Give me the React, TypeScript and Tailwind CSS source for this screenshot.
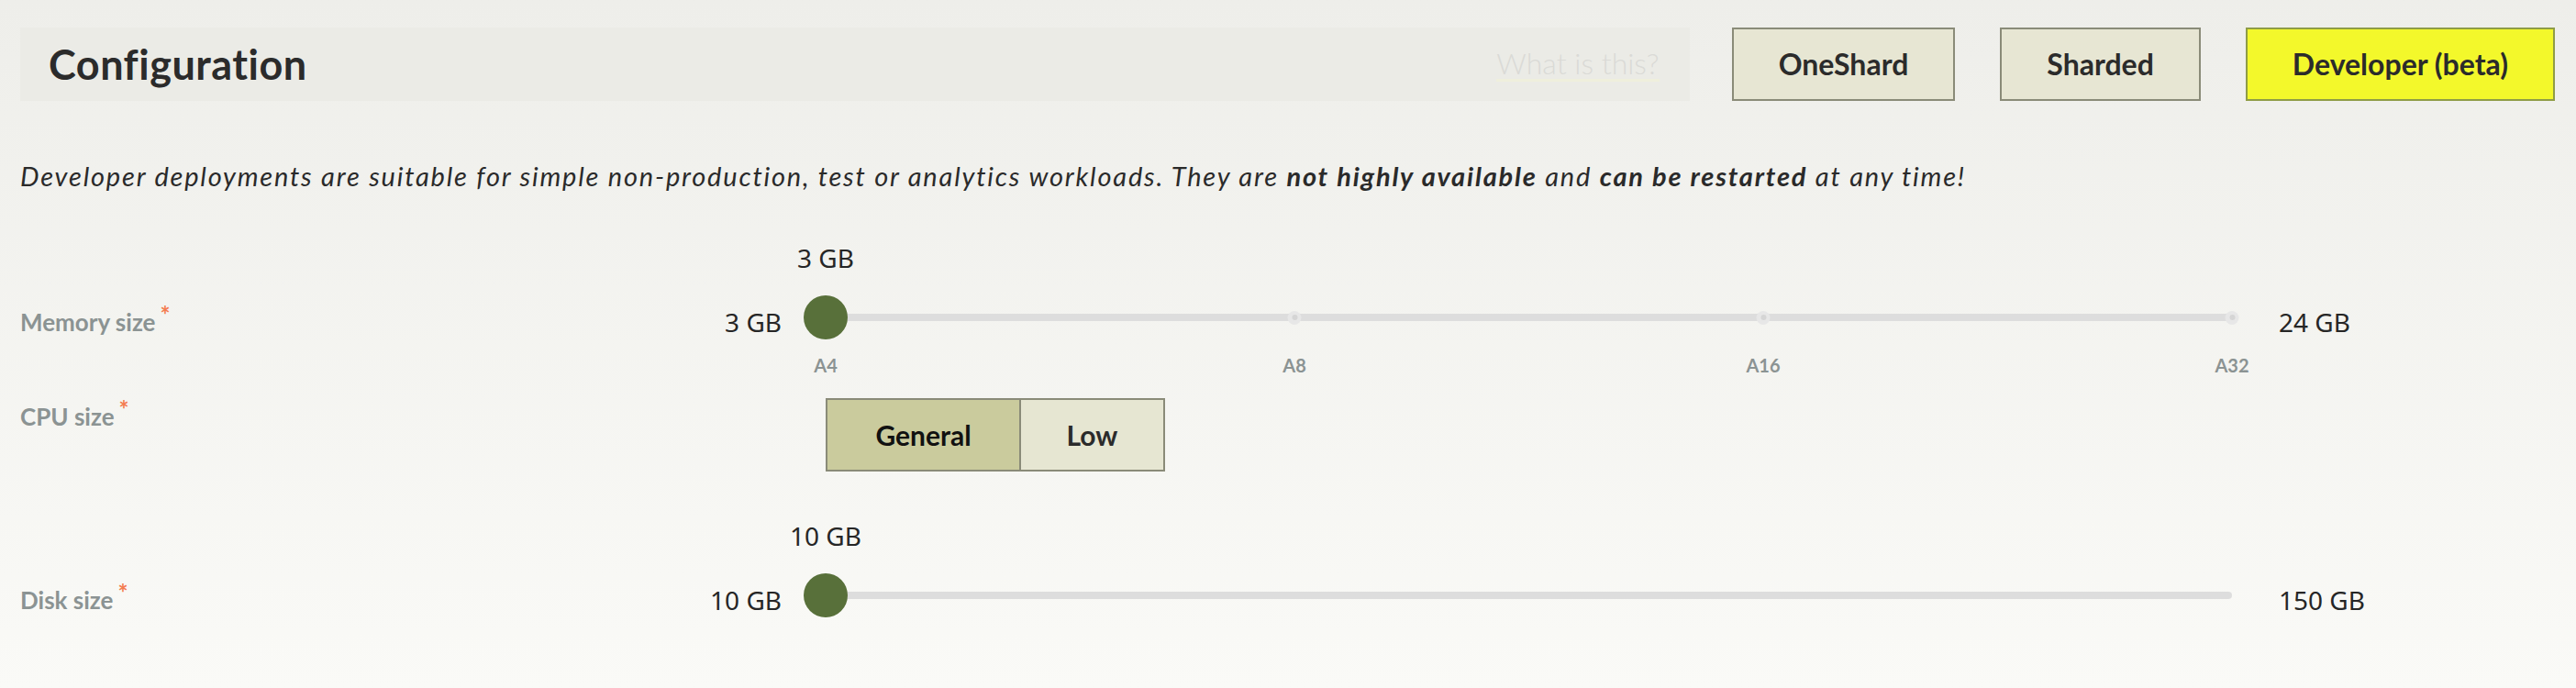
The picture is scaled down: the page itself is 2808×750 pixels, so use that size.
import React from 'react'

const MEMORY_TICKS = ['A4', 'A8', 'A16', 'A32']

function Required() {
  return <span className="relative -top-[8px] ml-[5px] text-[26px] leading-none text-[#f47c50]">*</span>
}

function FieldLabel({ text, className }: { text: string; className?: string }) {
  return (
    <div className={`text-[26px] leading-[32px] font-bold text-[#8b9393] ${className ?? ''}`}>
      {text}
      <Required />
    </div>
  )
}

interface SliderRowProps {
  label: string
  value: string
  min: string
  max: string
  ticks?: string[]
}

function SliderRow({ label, value, min, max, ticks }: SliderRowProps) {
  const pos = (i: number, n: number) => `${(i / (n - 1)) * 100}%`
  return (
    <div className="grid grid-cols-[682px_100px_1533px_auto] gap-x-[48px]">
      {/* value above the thumb */}
      <div className="col-start-3 flex h-[38px] w-0 justify-center whitespace-nowrap font-['Noto_Sans',sans-serif] text-[28px] leading-[38px] text-[#262626]">
        {value}
      </div>

      <FieldLabel text={label} className="col-start-1 mt-[35px]" />
      <div className="mt-[32px] text-right font-['Noto_Sans',sans-serif] text-[28px] leading-[38px] text-[#262626]">
        {min}
      </div>
      <div className="relative mt-[22px] flex h-[48px] items-center">
        <div className="h-[8px] w-full rounded-full bg-[#dddddd]" />
        {ticks?.map((t, i) => (
          <span
            key={t}
            className="absolute flex h-[15px] w-[15px] -translate-x-1/2 items-center justify-center rounded-full bg-[#e7e7e7]"
            style={{ left: pos(i, ticks.length) }}
          >
            <span className="h-[6px] w-[6px] rounded-full bg-[#d5d5d5]" />
          </span>
        ))}
        <span className="absolute left-0 h-[48px] w-[48px] -translate-x-1/2 rounded-full bg-[#58703a]" />
      </div>
      <div className="ml-[3px] mt-[32px] whitespace-nowrap font-['Noto_Sans',sans-serif] text-[28px] leading-[38px] text-[#262626]">
        {max}
      </div>

      {ticks && (
        <div className="relative col-start-3 mt-[16px] h-[24px]">
          {ticks.map((t, i) => (
            <span
              key={t}
              className="absolute -translate-x-1/2 text-[20px] leading-[24px] font-bold text-[#8b9393]"
              style={{ left: pos(i, ticks.length) }}
            >
              {t}
            </span>
          ))}
        </div>
      )}
    </div>
  )
}

function ModeButton({ label, active }: { label: string; active?: boolean }) {
  return (
    <button
      className={`h-[80px] border-2 px-[49px] text-[32px] font-bold text-[#2b2b2b] ${
        active ? 'border-[#8f9c46] bg-[#f3f82b]' : 'border-[#8a8b78] bg-[#e7e6d3]'
      }`}
    >
      {label}
    </button>
  )
}

export default function App() {
  return (
    <div className="min-h-[750px] bg-gradient-to-b from-[#eeeeea] to-[#fafaf7] pt-[30px] pl-[22px] pr-[23px] font-['Lato',sans-serif] text-[#2b2b2b]">
      <div className="flex gap-[46px]">
        <div className="flex h-[80px] flex-1 items-center justify-between bg-[#ebebe6] pl-[31px] pr-[33px]">
          <h1 className="text-[45px] leading-[44px] font-bold tracking-[0.5px] text-[#2b2b2b]">Configuration</h1>
          <span className="border-b-[3px] border-[#efefdc] text-[32px] leading-[34px] font-light text-[#dadad6]">
            What is this?
          </span>
        </div>
        <div className="flex gap-[49px]">
          <ModeButton label="OneShard" />
          <ModeButton label="Sharded" />
          <ModeButton label="Developer (beta)" active />
        </div>
      </div>

      <p className="mt-[65px] text-[29px] leading-[34px] tracking-[1.8px] italic text-[#2a2a2a]">
        Developer deployments are suitable for simple non-production, test or analytics workloads. They are{' '}
        <b className="font-bold">not highly available</b> and <b className="font-bold">can be restarted</b> at any
        time!
      </p>

      <div className="mt-[53px]">
        <SliderRow label="Memory size" value="3 GB" min="3 GB" max="24 GB" ticks={MEMORY_TICKS} />
      </div>

      <div className="mt-[24px] grid grid-cols-[682px_100px_auto] gap-x-[48px]">
        <FieldLabel text="CPU size" className="mt-[4px]" />
        <div className="col-start-3 flex h-[80px] w-fit border-2 border-[#8a8b78] text-[30px] font-bold">
          <div className="flex w-[211px] items-center justify-center border-r-2 border-[#8a8b78] bg-[#cacb9d] text-[#111111]">
            General
          </div>
          <div className="flex w-[155px] items-center justify-center bg-[#e6e6d2] text-[#2b2b2b]">Low</div>
        </div>
      </div>

      <div className="mt-[51px]">
        <SliderRow label="Disk size" value="10 GB" min="10 GB" max="150 GB" />
      </div>
    </div>
  )
}
